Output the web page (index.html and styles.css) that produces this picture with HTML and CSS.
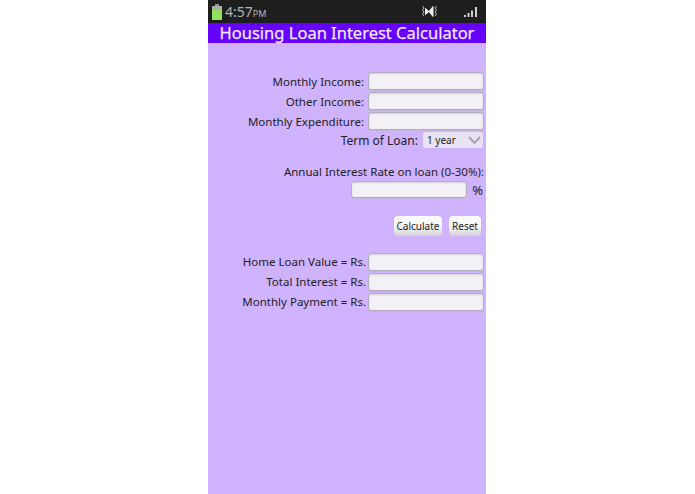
FILE: index.html
```html
<!DOCTYPE html>
<html lang="en">
<head>
<meta charset="utf-8">
<title>Housing Loan Interest Calculator</title>
<link rel="stylesheet" href="styles.css">
</head>
<body>
<main class="phone">
  <header class="status">
    <svg class="battery" width="10" height="16" viewBox="0 0 10 16"><rect x="3" y="0" width="4" height="2" fill="#8f9a8a"/><rect x="0" y="2" width="10" height="4" fill="#a8b0a4"/><rect x="0" y="6" width="10" height="10" fill="#93e05c"/></svg>
    <span class="time">4:57<small>PM</small></span>
    <svg class="mute" width="17" height="13" viewBox="0 0 17 13"><path d="M4.5 3.5 8 6.5 12 1.5V11.5L8 6.5 4.5 9.5Z" fill="#f0f0f0" stroke="#f0f0f0"/><path d="M1.5 1 3 3 1.5 5 3 7 1.5 9 3 11M15.5 1 14 3 15.5 5 14 7 15.5 9 14 11" stroke="#bcbcbc" stroke-width="1" fill="none"/></svg>
    <svg class="signal" width="13" height="11" viewBox="0 0 13 11"><rect x="0" y="8" width="2" height="2" fill="#cfcfcf"/><rect x="3.5" y="6" width="2" height="4" fill="#cfcfcf"/><rect x="7" y="3.5" width="2" height="6.5" fill="#cfcfcf"/><rect x="11" y="0" width="2" height="10" fill="#cfcfcf"/></svg>
  </header>
  <h1 class="title">Housing Loan Interest Calculator</h1>
  <form class="form">
    <div class="row"><label>Monthly Income:</label><input class="field" type="text"></div>
    <div class="row"><label>Other Income:</label><input class="field" type="text"></div>
    <div class="row"><label>Monthly Expenditure:</label><input class="field" type="text"></div>
    <div class="row term"><label>Term of Loan:</label>
      <div class="select"><span>1 year</span><svg width="13" height="8" viewBox="0 0 13 8"><path d="M1 1 6.5 7 12 1" stroke="#a4a4ae" stroke-width="2" fill="none"/></svg></div>
    </div>
    <div class="rate-label">Annual Interest Rate on loan (0-30%):</div>
    <div class="rate"><input class="field rate-field" type="text"><span class="pct">%</span></div>
    <div class="actions"><button type="button" class="btn calc">Calculate</button><button type="button" class="btn reset">Reset</button></div>
    <div class="row result"><label>Home Loan Value = Rs.</label><input class="field" type="text"></div>
    <div class="row result"><label>Total Interest = Rs.</label><input class="field" type="text"></div>
    <div class="row result"><label>Monthly Payment = Rs.</label><input class="field" type="text"></div>
  </form>
</main>
</body>
</html>
```
FILE: styles.css
```css
* { box-sizing: border-box; }
html, body { margin: 0; height: 100%; background: #fff; }
body { padding-left: 208px; font-family: "Noto Sans", "Liberation Sans", sans-serif; color: #222; overflow: hidden; }
.phone { width: 278px; height: 494px; background: #d0b3ff; display: flex; flex-direction: column; }
.status { height: 23px; background: #1e1e1e; display: flex; align-items: center; padding: 0 9px 0 4px; color: #b4b4b4; flex: none; }
.battery { flex: none; }
.time { font-size: 14px; margin-left: 3px; flex: 1; }
.time small { font-size: 9px; }
.mute { margin-right: 26px; }
.signal { margin-top: 1px; }
.title { margin: 0; height: 20px; flex: none; background: #6600ff; color: #f1e8ff; font-size: 16.5px; font-weight: 400; line-height: 19px; text-align: center; -webkit-text-stroke: .25px #f1e8ff; }
.form { display: flex; flex-direction: column; padding: 28px 2px 0 0; font-size: 11.5px; }
.row { display: flex; justify-content: flex-end; align-items: center; height: 20px; }
.row label { margin-right: 4px; white-space: nowrap; }
.field { width: 116px; height: 18px; padding: 0; background: #f3f1f5; border: 1px solid #b4acbf; border-radius: 3px; box-shadow: inset 0 1px 2px #d4d0d8, 0 1px 0 #c4b4e0; }
.term { height: 18px; padding-right: 1px; }
.term label { margin-right: 5px; font-size: 12px; }
.select { width: 60px; height: 16px; background: #e8e2f2; border-radius: 3px; display: flex; align-items: center; justify-content: space-between; padding: 0 2px 0 4px; font-size: 10px; }
.rate-label { margin-top: 14px; text-align: right; height: 18px; line-height: 18px; }
.rate { display: flex; justify-content: flex-end; align-items: center; height: 17px; }
.rate-field { width: 116px; height: 17px; margin-right: 5px; }
.pct { font-size: 13px; margin-right: 1px; }
.actions { display: flex; justify-content: flex-end; gap: 7px; margin-top: 18px; padding-right: 3px; }
.btn { height: 20px; padding: 0; font: inherit; font-size: 10px; color: #222; border: 0; border-radius: 4px; background: linear-gradient(#fafafa 45%, #d2d2d6); }
.calc { width: 48px; }
.reset { width: 32px; }
.actions + .result { margin-top: 16px; }
.result label { margin-right: 2px; padding-bottom: 2px; }
```
